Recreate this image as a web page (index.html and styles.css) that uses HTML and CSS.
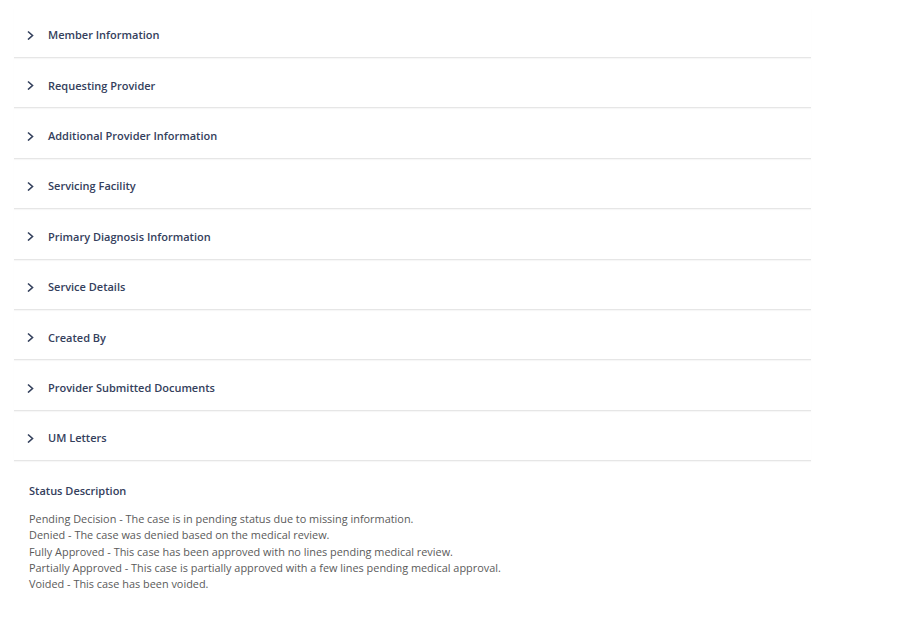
FILE: index.html
```html
<!DOCTYPE html>
<html lang="en">
<head>
<meta charset="utf-8">
<title>Case Details</title>
<link rel="stylesheet" href="styles.css">
</head>
<body>
<div class="page">
  <div class="accordion">
    <div class="row"><span class="chev"><svg viewBox="0 0 8 10" width="8" height="10"><path d="M1 1.5 L5.5 5.5 L1 9.5" fill="none" stroke="#34405c" stroke-width="1.6"/></svg></span><span class="title">Member Information</span></div>
    <div class="row"><span class="chev"><svg viewBox="0 0 8 10" width="8" height="10"><path d="M1 1.5 L5.5 5.5 L1 9.5" fill="none" stroke="#34405c" stroke-width="1.6"/></svg></span><span class="title">Requesting Provider</span></div>
    <div class="row"><span class="chev"><svg viewBox="0 0 8 10" width="8" height="10"><path d="M1 1.5 L5.5 5.5 L1 9.5" fill="none" stroke="#34405c" stroke-width="1.6"/></svg></span><span class="title">Additional Provider Information</span></div>
    <div class="row"><span class="chev"><svg viewBox="0 0 8 10" width="8" height="10"><path d="M1 1.5 L5.5 5.5 L1 9.5" fill="none" stroke="#34405c" stroke-width="1.6"/></svg></span><span class="title">Servicing Facility</span></div>
    <div class="row"><span class="chev"><svg viewBox="0 0 8 10" width="8" height="10"><path d="M1 1.5 L5.5 5.5 L1 9.5" fill="none" stroke="#34405c" stroke-width="1.6"/></svg></span><span class="title">Primary Diagnosis Information</span></div>
    <div class="row"><span class="chev"><svg viewBox="0 0 8 10" width="8" height="10"><path d="M1 1.5 L5.5 5.5 L1 9.5" fill="none" stroke="#34405c" stroke-width="1.6"/></svg></span><span class="title">Service Details</span></div>
    <div class="row"><span class="chev"><svg viewBox="0 0 8 10" width="8" height="10"><path d="M1 1.5 L5.5 5.5 L1 9.5" fill="none" stroke="#34405c" stroke-width="1.6"/></svg></span><span class="title">Created By</span></div>
    <div class="row"><span class="chev"><svg viewBox="0 0 8 10" width="8" height="10"><path d="M1 1.5 L5.5 5.5 L1 9.5" fill="none" stroke="#34405c" stroke-width="1.6"/></svg></span><span class="title">Provider Submitted Documents</span></div>
    <div class="row"><span class="chev"><svg viewBox="0 0 8 10" width="8" height="10"><path d="M1 1.5 L5.5 5.5 L1 9.5" fill="none" stroke="#34405c" stroke-width="1.6"/></svg></span><span class="title">UM Letters</span></div>
  </div>
  <div class="status">
    <h3 class="status-title">Status Description</h3>
    <p class="status-line">Pending Decision - The case is in pending status due to missing information.</p>
    <p class="status-line">Denied - The case was denied based on the medical review.</p>
    <p class="status-line">Fully Approved - This case has been approved with no lines pending medical review.</p>
    <p class="status-line">Partially Approved - This case is partially approved with a few lines pending medical approval.</p>
    <p class="status-line">Voided - This case has been voided.</p>
  </div>
</div>
</body>
</html>
```
FILE: styles.css
```css
html, body {
  margin: 0;
  padding: 0;
  background: #ffffff;
}
body {
  font-family: "Open Sans", "Liberation Sans", sans-serif;
}
.page {
  padding: 7.6px 0 0 14px;
  width: 797px;
}
.accordion {
  display: flex;
  flex-direction: column;
}
.row {
  box-sizing: border-box;
  height: 50.4px;
  padding-top: 5px;
  display: flex;
  align-items: center;
  border-bottom: 1px solid #e6e6e6;
  box-shadow: 0 1px 1px rgba(0,0,0,0.03);
}
.chev {
  display: flex;
  width: 10px;
  margin-left: 13px;
  margin-right: 11px;
}
.title {
  font-size: 11px;
  font-weight: 600;
  color: #34405c;
}
.status {
  padding: 22px 0 0 15px;
}
.status-title {
  margin: 0 0 12px 0;
  font-size: 11px;
  font-weight: 600;
  color: #34405c;
  line-height: 16px;
}
.status-line {
  margin: 0;
  font-size: 10.9px;
  line-height: 16.2px;
  color: #5a5a5a;
}
```
